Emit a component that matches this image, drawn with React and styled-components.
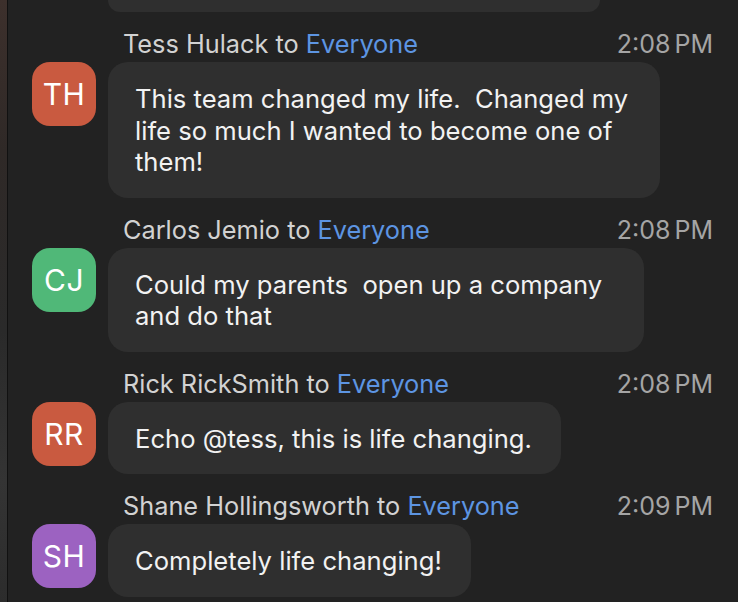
import React from 'react';
import styled, { createGlobalStyle } from 'styled-components';

const GlobalStyle = createGlobalStyle`
  html, body {
    margin: 0;
    padding: 0;
    background: #222222;
  }
  body {
    font-family: Inter, "Noto Sans", "Liberation Sans", sans-serif;
    -webkit-font-smoothing: antialiased;
  }
`;

const Window = styled.div`
  display: flex;
  width: 738px;
  height: 602px;
  overflow: hidden;
  background: #222222;
`;

const Edge = styled.div`
  width: 7px;
  flex: none;
  border-right: 1px solid #111111;
  background: linear-gradient(180deg, #3d302c 0%, #2f2927 25%, #2a2a2a 55%, #343434 80%, #2c2c2c 100%);
`;

const Feed = styled.div`
  flex: 1;
  padding: 0 25px 0 24px;
  display: flex;
  flex-direction: column;
`;

const CutBubble = styled.div`
  margin-left: 76px;
  width: 492px;
  height: 12px;
  background: #2f2f2f;
  border-radius: 0 0 18px 18px;
`;

const Message = styled.div`
  display: grid;
  grid-template-columns: 64px 1fr;
  column-gap: 12px;
  row-gap: 5px;
  margin-top: 19px;
`;

const Header = styled.div`
  grid-column: 2;
  display: flex;
  justify-content: space-between;
  align-items: center;
  height: 26px;
  padding-left: 15px;
  font-size: 25.3px;
  line-height: 26px;
  color: #d2d2d2;
`;

const To = styled.span`
  color: #5d95e2;
`;

const Time = styled.span`
  color: #a5a5a5;
  font-size: 25px;
  word-spacing: -3px;
`;

const Avatar = styled.div`
  grid-column: 1;
  width: 64px;
  height: 64px;
  border-radius: 18px;
  background: ${(p) => p.$color};
  color: #ffffff;
  font-size: 30px;
  display: flex;
  align-items: center;
  justify-content: center;
  letter-spacing: 0.5px;
`;

const Bubble = styled.div`
  grid-column: 2;
  justify-self: start;
  width: ${(p) => (p.$width ? `${p.$width}px` : 'auto')};
  box-sizing: border-box;
  padding: 21px 29px 20px 27px;
  background: #2f2f2f;
  border-radius: 20px;
  color: #f2f2f2;
  font-size: 25.6px;
  line-height: 31.5px;
  white-space: pre-wrap;
`;

const messages = [
  {
    initials: 'TH',
    color: '#c95a40',
    name: 'Tess Hulack',
    time: '2:08 PM',
    width: 552,
    text: 'This team changed my life.  Changed my\nlife so much I wanted to become one of\nthem!',
  },
  {
    initials: 'CJ',
    color: '#50b878',
    name: 'Carlos Jemio',
    time: '2:08 PM',
    width: 536,
    text: 'Could my parents  open up a company\nand do that',
  },
  {
    initials: 'RR',
    color: '#c95a40',
    name: 'Rick RickSmith',
    time: '2:08 PM',
    text: 'Echo @tess, this is life changing.',
  },
  {
    initials: 'SH',
    color: '#9c62c1',
    name: 'Shane Hollingsworth',
    time: '2:09 PM',
    text: 'Completely life changing!',
  },
];

const App = () => {
  return (
    <>
      <GlobalStyle />
      <Window>
        <Edge />
        <Feed>
          <CutBubble />
          {messages.map((m) => (
            <Message key={m.initials}>
              <Header>
                <span>
                  {m.name} to <To>Everyone</To>
                </span>
                <Time>{m.time}</Time>
              </Header>
              <Avatar $color={m.color}>{m.initials}</Avatar>
              <Bubble $width={m.width}>{m.text}</Bubble>
            </Message>
          ))}
        </Feed>
      </Window>
    </>
  );
};

export default App;
